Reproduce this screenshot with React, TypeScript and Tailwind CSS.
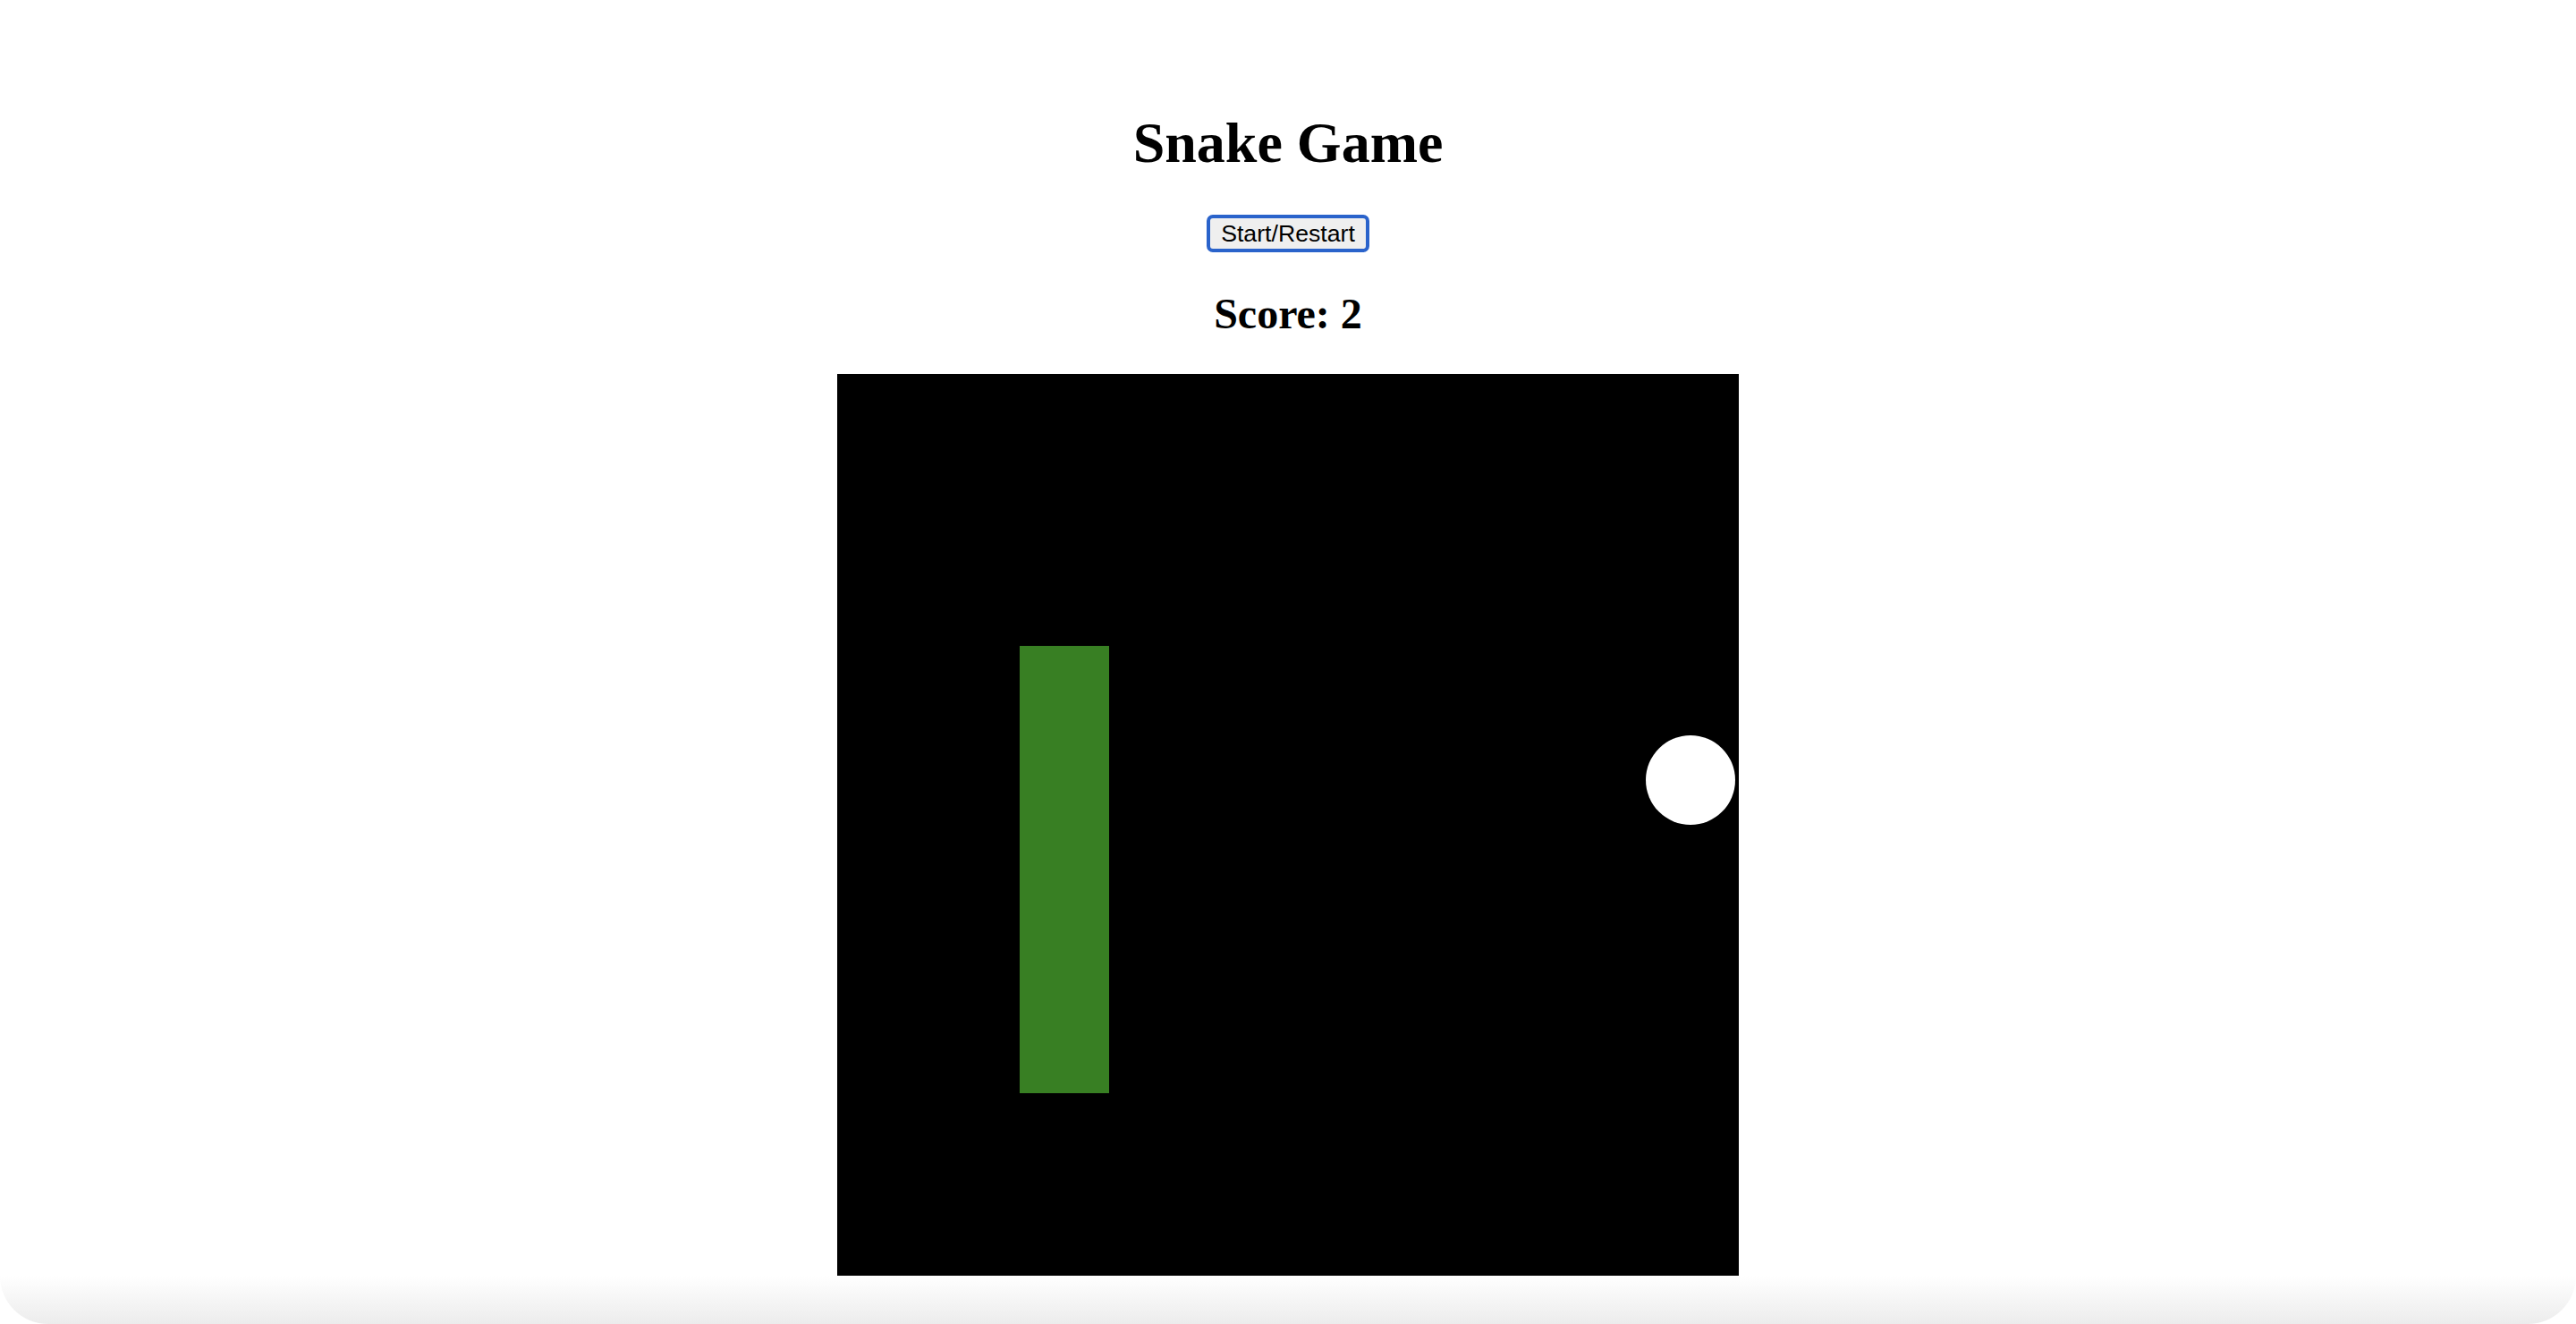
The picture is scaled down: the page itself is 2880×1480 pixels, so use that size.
import React from "react";

export default function App() {
  return (
    <div className="w-full min-h-[1480px] bg-white flex flex-col">
      <div className="flex flex-col items-center">
        <h1
          className="mt-[123px] text-[64px] leading-[74px] font-bold text-black"
          style={{ fontFamily: '"Liberation Serif", "Times New Roman", serif' }}
        >
          Snake Game
        </h1>
        <button
          className="mt-[43px] h-[42px] px-[12px] bg-[#efefef] border-[4px] border-[#2a63cb] rounded-[7px] text-[26.67px] leading-[30px] text-black"
          style={{ fontFamily: '"Liberation Sans", Arial, sans-serif' }}
        >
          Start/Restart
        </button>
        <h2
          className="mt-[41px] text-[48px] leading-[55px] font-bold text-black"
          style={{ fontFamily: '"Liberation Serif", "Times New Roman", serif' }}
        >
          Score: 2
        </h2>
        <div className="mt-[40px] w-[1008px] h-[1008px] border-[4px] border-black bg-black">
          <svg width="1000" height="1000" viewBox="0 0 1000 1000" className="block">
            <rect x="0" y="0" width="1000" height="1000" fill="#000" />
            <rect x="200" y="300" width="100" height="500" fill="#387f23" />
            <circle cx="950" cy="450" r="50" fill="#fff" />
          </svg>
        </div>
      </div>
      <div className="h-[54px] w-full bg-gradient-to-b from-[#ffffff] to-[#ececec] rounded-b-[60px]" />
    </div>
  );
}
